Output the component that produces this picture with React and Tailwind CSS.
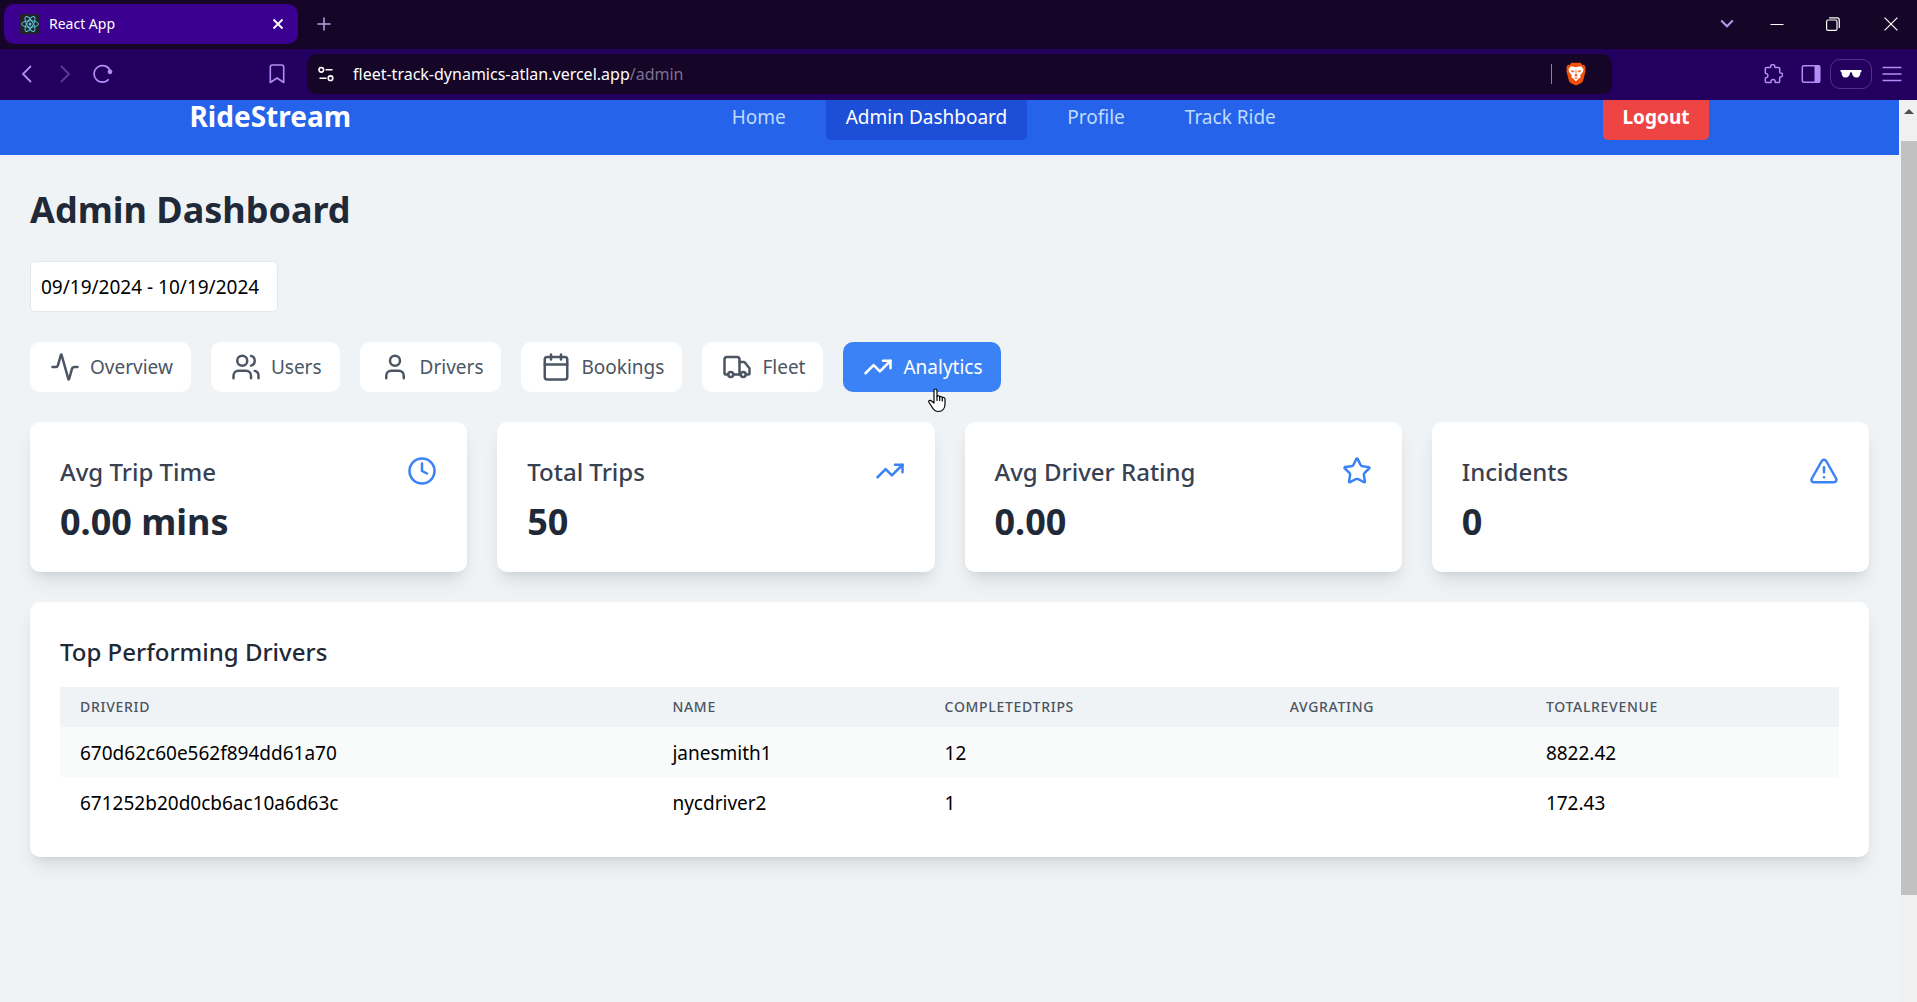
import React from "react";
import {
  Activity,
  Users,
  User,
  Calendar,
  Truck,
  TrendingUp,
  Clock,
  Star,
  TriangleAlert,
} from "lucide-react";

const tabs = [
  { label: "Overview", icon: Activity },
  { label: "Users", icon: Users },
  { label: "Drivers", icon: User },
  { label: "Bookings", icon: Calendar },
  { label: "Fleet", icon: Truck },
  { label: "Analytics", icon: TrendingUp, active: true },
];

const stats = [
  { label: "Avg Trip Time", value: "0.00 mins", icon: Clock },
  { label: "Total Trips", value: "50", icon: TrendingUp },
  { label: "Avg Driver Rating", value: "0.00", icon: Star },
  { label: "Incidents", value: "0", icon: TriangleAlert },
];

const columns = [
  { label: "driverId", width: "w-[33.3%]" },
  { label: "name", width: "w-[15.3%]" },
  { label: "completedTrips", width: "w-[19.4%]" },
  { label: "avgRating", width: "w-[14.4%]" },
  { label: "totalRevenue", width: "w-[17.6%]" },
];

const drivers = [
  ["670d62c60e562f894dd61a70", "janesmith1", "12", "", "8822.42"],
  ["671252b20d0cb6ac10a6d63c", "nycdriver2", "1", "", "172.43"],
];

function ReactLogo() {
  return (
    <svg viewBox="0 0 20 20" className="size-5 shrink-0" fill="none" stroke="#61c5d8" strokeWidth="1" aria-hidden="true">
      <rect width="20" height="20" fill="#20232a" stroke="none" />
      <ellipse cx="10" cy="10" rx="8.4" ry="3.2" />
      <ellipse cx="10" cy="10" rx="8.4" ry="3.2" transform="rotate(60 10 10)" />
      <ellipse cx="10" cy="10" rx="8.4" ry="3.2" transform="rotate(120 10 10)" />
      <circle cx="10" cy="10" r="1.5" fill="#61c5d8" stroke="none" />
    </svg>
  );
}

function BraveLogo() {
  return (
    <svg viewBox="0 0 20 24" className="h-6 w-5" aria-hidden="true">
      <path
        d="M5.500 .8h9l2 2.300 1.600-.3 1.600 2.600-.5 2.100.5 1.500-2.500 9.300c-.4 1.300-1.200 2.200-2.300 3L10 23.500l-4.900-2.200c-1.100-.8-1.900-1.700-2.300-3L.3 9l.5-1.500L.3 5.400l1.600-2.600 1.600.3z"
        fill="#f0500c"
      />
      <path
        d="M7 4.600l3 .7 3-.7 2.200-.3 2.300 2.900-.5 2.500-2.900 4 .5 2-2.100.9-.6 1L10 19.300l-1.900-1.700-.6-1-2.100-.9.5-2L3 9.700l-.5-2.500 2.300-2.900z"
        fill="#fff"
      />
      <path
        d="M4.800 8.200l3.700.9-.6 1.200-2.300-.6zM15.200 8.200l-3.700.9.6 1.200 2.300-.6zM9.600 7.500h.8l-.1 4.700 1.600 1L10 14.600l-1.900-1.400 1.600-1zM8 16l2-.8 2 .8-2 .8z"
        fill="#f0500c"
      />
    </svg>
  );
}

function TitleBar() {
  return (
    <div className="flex h-[49px] items-center bg-[#150526] pb-px pl-1">
      <div className="flex h-10 w-[294px] items-center rounded-[10px] bg-[#3b008f] pl-4 pr-2.5 text-white">
        <ReactLogo />
        <span className="ml-[9px] flex-1 text-sm">React App</span>
        <button aria-label="Close tab" className="grid size-5 place-items-center">
          <svg viewBox="0 0 12 12" className="size-3" stroke="currentColor" strokeWidth="1.8" fill="none">
            <path d="M1.500 1.500l9 9M10.500 1.500l-9 9" />
          </svg>
        </button>
      </div>
      <button aria-label="New tab" className="ml-[18px] grid size-4 place-items-center text-[#b9a3e3]">
        <svg viewBox="0 0 14 14" className="size-[14px]" stroke="currentColor" strokeWidth="1.500" fill="none">
          <path d="M7 .5v13M.5 7h13" />
        </svg>
      </button>
      <div className="ml-auto flex items-center">
        <button aria-label="Search tabs" className="mr-3 grid size-5 place-items-center text-[#b79bf0]">
          <svg viewBox="0 0 14 10" className="h-[10px] w-[14px]" stroke="currentColor" strokeWidth="2" fill="none">
            <path d="M1.200 1.500L7 7.300l5.800-5.800" />
          </svg>
        </button>
        <button aria-label="Minimize" className="grid h-10 w-14 place-items-center text-white">
          <svg viewBox="0 0 14 14" className="size-[14px]" stroke="currentColor" fill="none">
            <path d="M.5 7.500h13" />
          </svg>
        </button>
        <button aria-label="Restore" className="grid h-10 w-14 place-items-center text-white">
          <svg viewBox="0 0 14 14" className="size-[14px]" stroke="currentColor" strokeWidth="1.200" fill="none">
            <rect x=".6" y="3" width="10.400" height="10.400" rx="1.500" />
            <path d="M3.200 .8h7.800a2.300 2.300 0 0 1 2.300 2.300v7.800" />
          </svg>
        </button>
        <button aria-label="Close window" className="ml-1 grid h-10 w-[52px] place-items-center text-white">
          <svg viewBox="0 0 14 14" className="size-[14px]" stroke="currentColor" strokeWidth="1.200" fill="none">
            <path d="M.6 .6l12.800 12.800M13.400 .6L.6 13.400" />
          </svg>
        </button>
      </div>
    </div>
  );
}

function Toolbar() {
  return (
    <div className="flex h-[51px] items-center bg-[#23005d] pb-0.5 pr-[15px] text-[#b48cf5]">
      <div className="flex w-[307px] shrink-0 items-center pl-[17px] pr-5">
        <button aria-label="Back" className="grid size-5 place-items-center">
          <svg viewBox="0 0 12 18" className="h-[18px] w-3" stroke="currentColor" strokeWidth="1.800" fill="none">
            <path d="M10 1L2 9l8 8" />
          </svg>
        </button>
        <button aria-label="Forward" disabled className="ml-[18px] grid size-5 place-items-center text-[#5e3a9b]">
          <svg viewBox="0 0 12 18" className="h-[18px] w-3" stroke="currentColor" strokeWidth="1.800" fill="none">
            <path d="M2 1l8 8-8 8" />
          </svg>
        </button>
        <button aria-label="Reload" className="ml-[18px] grid size-5 place-items-center">
          <svg viewBox="0 0 20 20" className="size-5" fill="none">
            <path d="M15.700 15.300A8.300 8.300 0 1 1 17 6.500" stroke="currentColor" strokeWidth="1.700" />
            <circle cx="17" cy="7.800" r="2.400" fill="currentColor" />
          </svg>
        </button>
        <button aria-label="Bookmark this page" className="ml-auto grid size-5 place-items-center">
          <svg viewBox="0 0 16 20" className="h-5 w-4" stroke="currentColor" strokeWidth="1.600" fill="none" strokeLinejoin="round">
            <path d="M1.300 3a2 2 0 0 1 2-2h9.400a2 2 0 0 1 2 2v15.500L8 14l-6.700 4.500z" />
          </svg>
        </button>
      </div>
      <div className="flex h-10 flex-1 items-center rounded-[10px] bg-[#150526] pl-[11px] pr-[26px]">
        <svg viewBox="0 0 16 16" className="size-4 shrink-0" stroke="#fff" strokeWidth="1.600" fill="none" aria-hidden="true">
          <circle cx="3.300" cy="3.800" r="2.300" />
          <path d="M7.500 3.800H14.500M1.500 12.200h7" />
          <circle cx="12.500" cy="12.200" r="2.300" />
        </svg>
        <div className="ml-[19px] flex-1 text-base text-white">
          fleet-track-dynamics-atlan.vercel.app<span className="text-[#7d7091]">/admin</span>
        </div>
        <span className="h-5 w-px bg-[#8a7f9c]" />
        <button aria-label="Brave Shields" className="ml-3.5 grid h-6 w-5 place-items-center">
          <BraveLogo />
        </button>
      </div>
      <div className="flex w-[290px] shrink-0 items-center justify-end">
        <button aria-label="Extensions" className="grid size-5 place-items-center">
          <svg viewBox="0 0 20 20" className="size-5" stroke="currentColor" strokeWidth="1.500" fill="none" strokeLinejoin="round">
            <path d="M3.500 3.500h3.700c.6 0 .4-.5.400-.9a2.100 2.100 0 0 1 4.200 0c0 .4-.2.900.4.900h3.300a1.200 1.200 0 0 1 1.200 1.200v3.500c0 .7.400.6.900.7a2 2 0 0 1 0 4c-.5.100-.9 0-.9.700v3.700a1.200 1.200 0 0 1-1.200 1.200h-2.800c-.6 0-.5-.4-.6-.9a2 2 0 0 0-4 0c-.1.500 0 .9-.6.900h-4a1.200 1.200 0 0 1-1.200-1.200v-2.800c0-.7.400-.6.900-.7a2.200 2.200 0 0 0 0-4.300c-.5-.1-.9 0-.9-.7V4.700a1.200 1.200 0 0 1 1.200-1.200z" />
          </svg>
        </button>
        <button aria-label="Sidebar" className="ml-[18px] grid size-5 place-items-center">
          <svg viewBox="0 0 20 20" className="size-5" fill="none">
            <rect x="1.300" y="1.800" width="17.500" height="16.500" rx="1.500" stroke="currentColor" strokeWidth="1.500" />
            <path d="M13.500 1.500h5.500v17h-5.500z" fill="currentColor" />
          </svg>
        </button>
        <button aria-label="Private window" className="ml-[9px] grid h-[30px] w-[42px] place-items-center rounded-[10px] border border-[#53308f]">
          <svg viewBox="0 0 22 10" className="h-[10px] w-[22px]" fill="#fff">
            <path d="M.5 1h21v1.500l-1 .7c0 3-1.400 5.300-4 5.300-2.700 0-4.200-2-4.600-4.800-.5-.5-1.300-.5-1.800 0C9.700 6.500 8.200 8.500 5.500 8.500c-2.600 0-4-2.300-4-5.300l-1-.7z" />
          </svg>
        </button>
        <button aria-label="Menu" className="ml-[10px] grid size-5 place-items-center">
          <svg viewBox="0 0 20 16" className="h-4 w-5" stroke="currentColor" strokeWidth="1.600">
            <path d="M.5 1.500h19M.5 8h19M.5 14.500h19" />
          </svg>
        </button>
      </div>
    </div>
  );
}

function NavLink({ children, active }) {
  return (
    <a
      href="#"
      className={
        active
          ? "rounded-b-[5px] bg-[#1d4ed8] px-5 pb-2.5 pt-1 leading-[26px] text-white"
          : "rounded-b-[5px] px-5 pb-2.5 pt-1 leading-[26px] text-[#bfdbfe]"
      }
    >
      {children}
    </a>
  );
}

function SiteHeader() {
  return (
    <header className="h-[55px] bg-[#2563eb]">
      <div className="mx-auto flex w-full max-w-[1600px] items-start justify-between px-10">
        <a href="#" className="text-[28px] font-bold leading-8 text-white">
          RideStream
        </a>
        <nav className="flex gap-5 pl-[54px] text-[19px]">
          <NavLink>Home</NavLink>
          <NavLink active>Admin Dashboard</NavLink>
          <NavLink>Profile</NavLink>
          <NavLink>Track Ride</NavLink>
        </nav>
        <button className="rounded-b-[5px] bg-[#ef4444] px-5 pb-2.5 pt-1 text-[19px] font-bold leading-[26px] text-white">
          Logout
        </button>
      </div>
    </header>
  );
}

function HandCursor() {
  return (
    <svg viewBox="0 0 19 25" className="absolute left-[85px] top-[46px] h-[25px] w-[19px]" aria-hidden="true">
      <path
        d="M6 2.500c0-2 3-2 3 0v6c.3-1.200 2.600-1 2.700.5.500-1 2.500-.7 2.600.8.600-.8 2.700-.4 2.700 1.200v5c0 4.500-2.500 7.500-6.500 7.500-3.500 0-5-1.500-6.500-4.500l-3-4.500c-1-1.700 1-3 2.500-1.500L6 15z"
        fill="#fff"
        stroke="#000"
        strokeWidth="1.200"
        strokeLinejoin="round"
      />
      <path d="M9 8.500v4M11.700 9v3.500M14.300 10v3" stroke="#000" strokeWidth="1.200" strokeLinecap="round" />
    </svg>
  );
}

function TabButton({ label, icon: Icon, active }) {
  return (
    <button
      className={
        active
          ? "relative flex h-[50px] items-center gap-2.5 rounded-[10px] bg-[#3b82f6] pl-5 pr-[18px] text-[19px] text-white"
          : "flex h-[50px] items-center gap-2.5 rounded-[10px] bg-white pl-5 pr-[18px] text-[19px] text-[#4b5563]"
      }
    >
      <Icon size={30} />
      {label}
      {active && <HandCursor />}
    </button>
  );
}

function StatCard({ label, value, icon: Icon }) {
  return (
    <div className="rounded-[10px] bg-white px-[30px] pb-7 pt-8 shadow-[0_12px_19px_-4px_rgba(0,0,0,0.1),0_5px_8px_-5px_rgba(0,0,0,0.1)]">
      <div className="mb-2.5 flex items-center justify-between">
        <h3 className="text-2xl font-medium leading-[35px] text-[#374151]">{label}</h3>
        <Icon size={30} className="-mt-0.5 text-[#3b82f6]" />
      </div>
      <p className="text-[36px] font-bold leading-[45px] text-[#1f2937]">{value}</p>
    </div>
  );
}

function DriversTable() {
  return (
    <section className="rounded-[10px] bg-white px-[30px] pb-[30px] pt-8 shadow-[0_12px_19px_-4px_rgba(0,0,0,0.1),0_5px_8px_-5px_rgba(0,0,0,0.1)]">
      <h3 className="mb-[18px] text-2xl font-medium leading-[35px] text-[#1f2937]">Top Performing Drivers</h3>
      <table className="w-full table-fixed text-left">
        <thead>
          <tr className="h-10 bg-[#f0f3f5]">
            {columns.map((c) => (
              <th key={c.label} className={`${c.width} px-5 text-sm font-medium uppercase tracking-wider text-[#4b5563]`}>
                {c.label}
              </th>
            ))}
          </tr>
        </thead>
        <tbody>
          {drivers.map((row) => (
            <tr key={row[0]} className="h-[50px] text-[19px] text-black odd:bg-[#f9fbfb]">
              {row.map((cell, i) => (
                <td key={i} className="px-5 pt-0.5">
                  {cell}
                </td>
              ))}
            </tr>
          ))}
        </tbody>
      </table>
    </section>
  );
}

function Scrollbar() {
  return (
    <div className="flex w-4 shrink-0 flex-col bg-[#f0f0f0]" aria-hidden="true">
      <div className="grid h-[41px] place-items-start justify-center pt-[9px]">
        <svg viewBox="0 0 10 5" className="h-[5px] w-[10px]">
          <path d="M0 5L5 0l5 5z" fill="#505050" />
        </svg>
      </div>
      <div className="flex-1">
        <div className="h-[87.6%] bg-[#c1c1c1]" />
      </div>
    </div>
  );
}

export default function App() {
  return (
    <div className="flex h-screen flex-col overflow-hidden bg-[#f0f3f5] font-['Noto_Sans','Open_Sans',sans-serif]">
      <TitleBar />
      <Toolbar />
      <div className="flex min-h-0 flex-1">
        <div className="mr-0.5 flex-1">
          <SiteHeader />
          <main className="px-[30px] pt-8">
            <h1 className="mb-7 text-[36px] font-bold leading-[46px] text-[#1f2937]">Admin Dashboard</h1>
            <input
              type="text"
              readOnly
              aria-label="Date range"
              defaultValue="09/19/2024 - 10/19/2024"
              className="mb-[30px] block h-[51px] w-[248px] rounded-[5px] border border-[#e5e7eb] bg-white px-2.5 text-[19px] text-black"
            />
            <div className="mb-[30px] flex gap-5">
              {tabs.map((t) => (
                <TabButton key={t.label} {...t} />
              ))}
            </div>
            <div className="mb-[30px] grid grid-cols-4 gap-[30px]">
              {stats.map((s) => (
                <StatCard key={s.label} {...s} />
              ))}
            </div>
            <DriversTable />
          </main>
        </div>
        <Scrollbar />
      </div>
    </div>
  );
}
